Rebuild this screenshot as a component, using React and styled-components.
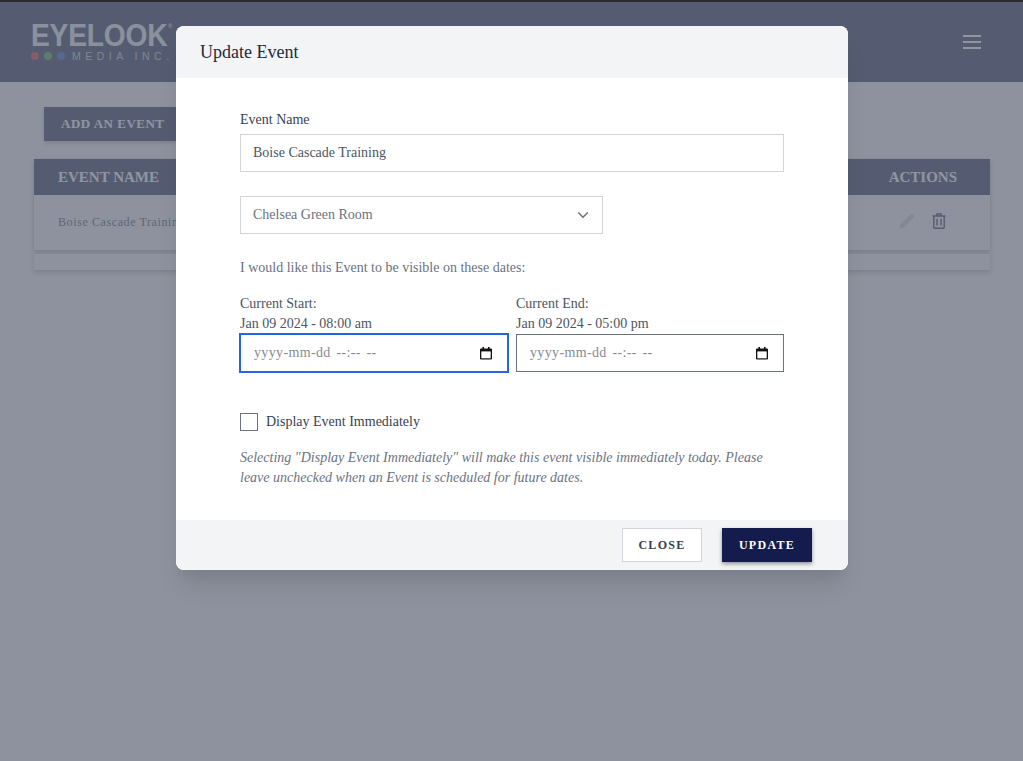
import React from "react";
import styled, { createGlobalStyle } from "styled-components";

const Global = createGlobalStyle`
  html, body { margin: 0; padding: 0; }
  body { background: #f3f4f6; font-family: "Liberation Serif", "Times New Roman", serif; color: #374151; }
  * { box-sizing: border-box; }
`;

const Page = styled.div`
  position: relative;
  height: 761px;
  overflow: hidden;
  background: #f3f4f6;
  border-top: 2px solid #2a2b30;
`;
const Header = styled.header`
  height: 80px;
  background: #141c48;
  display: flex;
  align-items: flex-start;
  justify-content: space-between;
  padding: 19px 42px 0 31px;
`;
const Logo = styled.div`
  display: flex;
  flex-direction: column;
  width: 150px;
`;
const LogoWord = styled.div`
  font-family: "Liberation Sans", Arial, sans-serif;
  font-weight: 700;
  font-size: 32px;
  line-height: 28px;
  letter-spacing: -0.2px;
  color: #ecedef;
  white-space: nowrap;
  transform: scaleX(0.88);
  transform-origin: left center;
`;
const LogoMark = styled.span`
  font-size: 6px;
  line-height: 0;
  vertical-align: 18px;
  margin-left: 1px;
  letter-spacing: 0;
`;
const LogoSub = styled.div`
  display: flex;
  align-items: center;
  gap: 5px;
  margin-top: 1px;
  font-family: "Liberation Sans", Arial, sans-serif;
  font-size: 10.5px;
  line-height: 12px;
  letter-spacing: 4.5px;
  color: #bcc0c8;
`;
const Dot = styled.span`
  width: 8px;
  height: 8px;
  flex: none;
  border-radius: 50%;
  background: ${(p) => p.$c};
`;
const LogoSubText = styled.span`
  margin-left: 2px;
  white-space: nowrap;
`;
const Burger = styled.div`
  margin-top: 14px;
  width: 18px;
  display: flex;
  flex-direction: column;
  gap: 4px;
`;
const BurgerLine = styled.span`
  height: 2px;
  background: #fff;
`;
const Content = styled.main`
  padding: 25px 33px 0 34px;
`;
const AddButton = styled.button`
  display: block;
  margin: 0 0 18px 10px;
  height: 34px;
  width: 160px;
  padding: 0 17px;
  text-align: left;
  border: 0;
  background: #141c48;
  color: #fff;
  font: 700 13px "Liberation Serif", serif;
  letter-spacing: 0.5px;
  box-shadow: 0 2px 4px rgba(0, 0, 0, 0.3);
`;
const Table = styled.div`
  box-shadow: 0 3px 5px rgba(0, 0, 0, 0.3), 0 0 3px rgba(0, 0, 0, 0.12);
  background: #f3f4f6;
`;
const TableHead = styled.div`
  height: 36px;
  background: #141c48;
  color: #fff;
  display: flex;
  align-items: center;
  justify-content: space-between;
  padding: 0 33px 0 24px;
  font-weight: 700;
  font-size: 15px;
  letter-spacing: 0;
`;
const TableRow = styled.div`
  height: 55px;
  display: flex;
  align-items: center;
  justify-content: space-between;
  padding: 0 44px 3px 24px;
  font-size: 12px;
  letter-spacing: 0.6px;
  color: #374151;
`;
const RowName = styled.span`
  padding-top: 3px;
`;
const RowActions = styled.div`
  display: flex;
  align-items: center;
  gap: 17px;
`;
const TableFoot = styled.div`
  height: 16px;
  margin-top: 4px;
  background: #f3f4f6;
  box-shadow: 0 3px 5px rgba(0, 0, 0, 0.25), 0 0 3px rgba(0, 0, 0, 0.1);
`;
const Overlay = styled.div`
  position: absolute;
  inset: 0;
  background: rgba(107, 114, 128, 0.75);
`;
const Modal = styled.div`
  width: 672px;
  margin: 24px 0 0 176px;
  background: #fff;
  border-radius: 8px;
  overflow: hidden;
  box-shadow: 0 20px 25px -5px rgba(0, 0, 0, 0.1), 0 10px 10px -5px rgba(0, 0, 0, 0.04);
`;
const ModalHeader = styled.div`
  height: 52px;
  background: #f3f4f6;
  padding: 0 24px;
  display: flex;
  align-items: center;
  font-size: 18px;
  color: #1f2937;
`;
const ModalBody = styled.div`
  height: 442px;
  padding: 32px 64px 0;
  font-size: 14px;
  line-height: 20px;
`;
const Label = styled.div`
  color: ${(p) => p.$c || "#4b5563"};
`;
const TextBox = styled.div`
  height: 38px;
  margin-top: 4px;
  padding: 0 12px;
  display: flex;
  align-items: center;
  border: 1px solid #d1d5db;
  color: #4b5563;
`;
const SelectBox = styled(TextBox)`
  width: 363px;
  margin-top: 24px;
  justify-content: space-between;
  color: #6b7280;
  padding-right: 12px;
`;
const Hint = styled.p`
  margin: 24px 0 0;
  color: #6b7280;
`;
const DateGrid = styled.div`
  display: grid;
  grid-template-columns: 268px 268px;
  gap: 8px;
  margin-top: 16px;
`;
const DateBox = styled.div`
  height: 38px;
  padding: 0 15px 0 13px;
  display: flex;
  align-items: center;
  justify-content: space-between;
  border: 1px solid ${(p) => (p.$focus ? "#2563eb" : "#6b7280")};
  box-shadow: ${(p) => (p.$focus ? "0 0 0 1px #2563eb" : "none")};
  color: #868b93;
`;
const DateText = styled.span`
  letter-spacing: 0.35px;
  word-spacing: 2px;
`;
const CheckRow = styled.div`
  display: flex;
  align-items: center;
  gap: 8px;
  margin-top: 40px;
  color: #374151;
`;
const CheckBox = styled.span`
  width: 18px;
  height: 18px;
  border: 1px solid #6b7280;
  background: #fff;
`;
const Note = styled.p`
  margin: 16px 0 0;
  font-style: italic;
  color: #6b7280;
`;
const ModalFooter = styled.div`
  height: 50px;
  background: #f3f4f6;
  display: flex;
  justify-content: flex-end;
  gap: 20px;
  padding: 8px 36px 0 0;
`;
const CloseButton = styled.button`
  width: 80px;
  height: 34px;
  background: #fff;
  border: 1px solid #d1d5db;
  color: #374151;
  font: 700 12px "Liberation Serif", serif;
  letter-spacing: 1.3px;
`;
const UpdateButton = styled.button`
  width: 90px;
  height: 34px;
  background: #141b4d;
  border: 0;
  color: #fff;
  font: 700 12px "Liberation Serif", serif;
  letter-spacing: 1.3px;
  box-shadow: 0 2px 4px rgba(0, 0, 0, 0.4);
`;

const Calendar = () => (
  <svg width="12" height="13" viewBox="0 0 12 13" aria-hidden="true">
    <path d="M1 1.5h10a1 1 0 0 1 1 1v9a1 1 0 0 1-1 1H1a1 1 0 0 1-1-1v-9a1 1 0 0 1 1-1z" fill="#111" />
    <rect x="2.4" y="0" width="1.6" height="2" fill="#111" />
    <rect x="8" y="0" width="1.6" height="2" fill="#111" />
    <rect x="1.3" y="4.4" width="9.4" height="6.9" fill="#fff" />
  </svg>
);
const Chevron = () => (
  <svg width="14" height="14" viewBox="0 0 14 14" fill="none" stroke="#6b7280" strokeWidth="1.5" aria-hidden="true">
    <path d="M2.2 4.5L7 9.3l4.8-4.8" />
  </svg>
);
const Pencil = () => (
  <svg width="16" height="16" viewBox="0 0 16 16" aria-hidden="true">
    <path d="M0.6 15.4l.7-3.8L11.6 1.3a1.5 1.5 0 0 1 2.1 0l1 1a1.5 1.5 0 0 1 0 2.1L4.4 14.7z" fill="#c4c7cc" />
  </svg>
);
const Trash = () => (
  <svg width="14" height="16" viewBox="0 0 14 16" fill="none" stroke="#141c48" strokeWidth="1.4" aria-hidden="true">
    <path d="M0.5 3h13M4.8 3V1h4.4v2M1.8 3v11.6c0 .4.3.7.7.7h9c.4 0 .7-.3.7-.7V3M5 5.8v6.8M9 5.8v6.8" />
  </svg>
);

export default function App() {
  return (
    <Page>
      <Global />
      <Header>
        <Logo>
          <LogoWord>
            EYELOOK<LogoMark>®</LogoMark>
          </LogoWord>
          <LogoSub>
            <Dot $c="#e11d2e" />
            <Dot $c="#2e9e3f" />
            <Dot $c="#1d4fb0" />
            <LogoSubText>MEDIA INC.</LogoSubText>
          </LogoSub>
        </Logo>
        <Burger>
          <BurgerLine />
          <BurgerLine />
          <BurgerLine />
        </Burger>
      </Header>
      <Content>
        <AddButton>ADD AN EVENT</AddButton>
        <Table>
          <TableHead>
            <span>EVENT NAME</span>
            <span>ACTIONS</span>
          </TableHead>
          <TableRow>
            <RowName>Boise Cascade Training</RowName>
            <RowActions>
              <Pencil />
              <Trash />
            </RowActions>
          </TableRow>
        </Table>
        <TableFoot />
      </Content>
      <Overlay>
        <Modal>
          <ModalHeader>Update Event</ModalHeader>
          <ModalBody>
            <Label $c="#374151">Event Name</Label>
            <TextBox>Boise Cascade Training</TextBox>
            <SelectBox>
              Chelsea Green Room
              <Chevron />
            </SelectBox>
            <Hint>I would like this Event to be visible on these dates:</Hint>
            <DateGrid>
              <div>
                <Label>Current Start:</Label>
                <Label>Jan 09 2024 - 08:00 am</Label>
                <DateBox $focus>
                  <DateText>yyyy-mm-dd --:-- --</DateText>
                  <Calendar />
                </DateBox>
              </div>
              <div>
                <Label>Current End:</Label>
                <Label>Jan 09 2024 - 05:00 pm</Label>
                <DateBox>
                  <DateText>yyyy-mm-dd --:-- --</DateText>
                  <Calendar />
                </DateBox>
              </div>
            </DateGrid>
            <CheckRow>
              <CheckBox />
              Display Event Immediately
            </CheckRow>
            <Note>
              Selecting "Display Event Immediately" will make this event visible immediately today. Please leave unchecked when an Event is scheduled for future dates.
            </Note>
          </ModalBody>
          <ModalFooter>
            <CloseButton>CLOSE</CloseButton>
            <UpdateButton>UPDATE</UpdateButton>
          </ModalFooter>
        </Modal>
      </Overlay>
    </Page>
  );
}
